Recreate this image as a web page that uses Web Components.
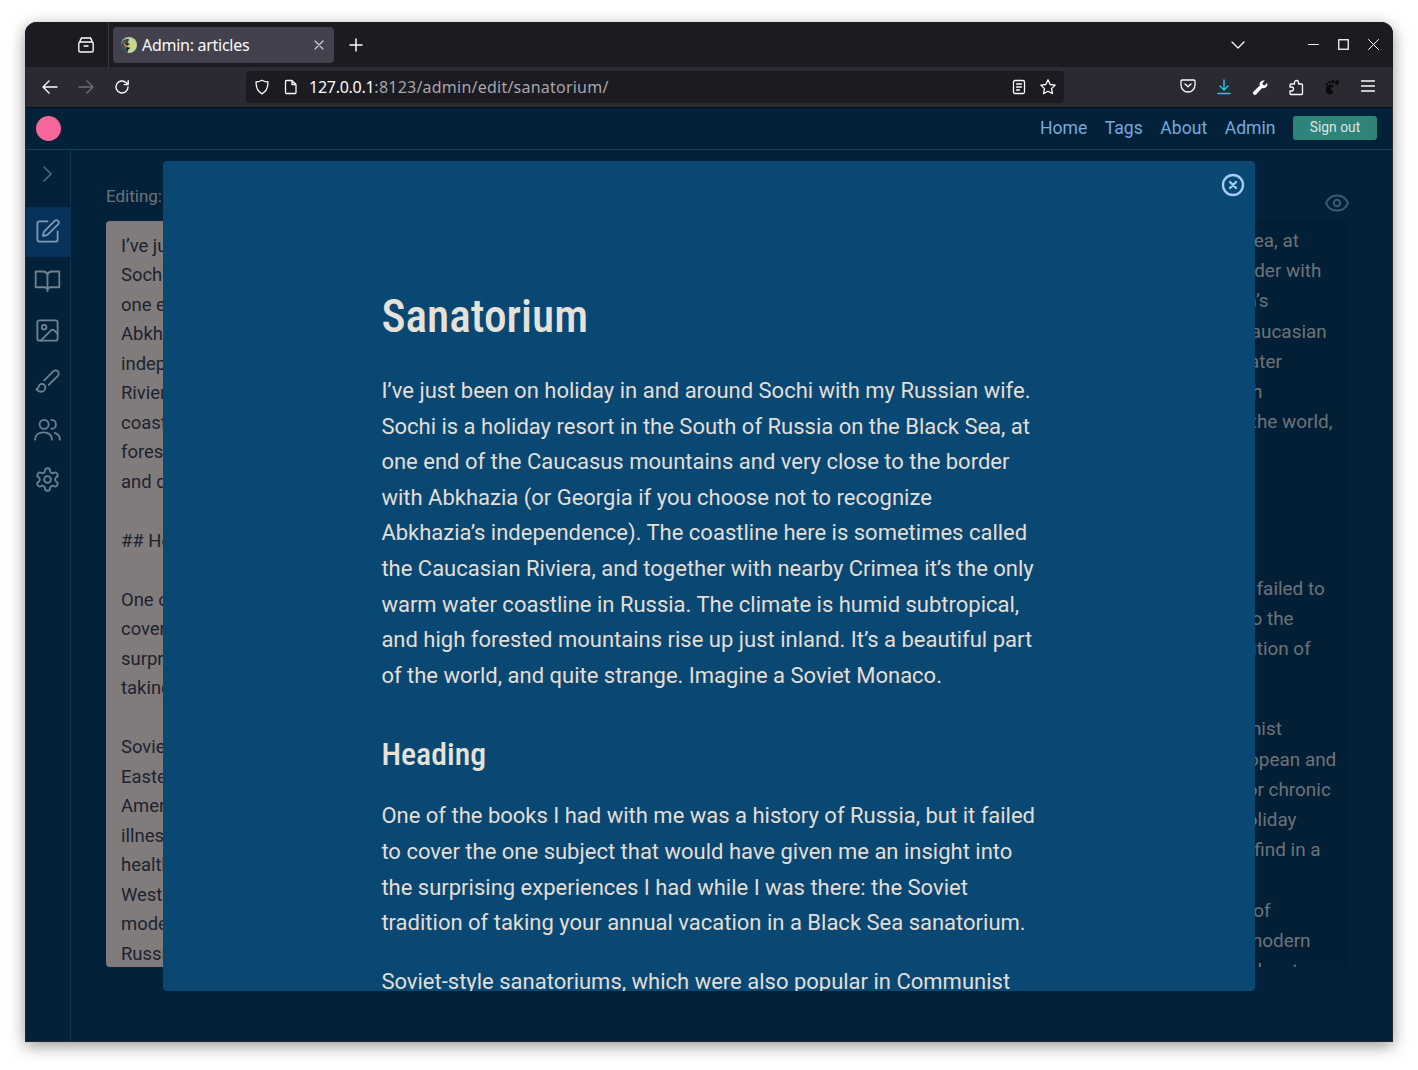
<!DOCTYPE html>
<html lang="en"><head><meta charset="utf-8"><title>Admin: articles</title>
<style>
html,body{margin:0;padding:0;background:#fff;height:1070px;overflow:hidden}
body{padding:22px 25px 28px;box-sizing:border-box;display:flex;font-family:Roboto,sans-serif}
</style></head><body>
<browser-window>
  <tab-strip slot="tabs"></tab-strip>
  <nav-toolbar slot="toolbar"></nav-toolbar>
  <app-header></app-header>
  <admin-editor></admin-editor>
  <article-modal>
    <h1>Sanatorium</h1>
    <p>I’ve just been on holiday in and around Sochi with my Russian wife. Sochi is a holiday resort in the South of Russia on the Black Sea, at one end of the Caucasus mountains and very close to the border with Abkhazia (or Georgia if you choose not to recognize Abkhazia’s independence). The coastline here is sometimes called the Caucasian Riviera, and together with nearby Crimea it’s the only warm water coastline in Russia. The climate is humid subtropical, and high forested mountains rise up just inland. It’s a beautiful part of the world, and quite strange. Imagine a Soviet Monaco.</p>
    <h2>Heading</h2>
    <p>One of the books I had with me was a history of Russia, but it failed to cover the one subject that would have given me an insight into the surprising experiences I had while I was there: the Soviet tradition of taking your annual vacation in a Black Sea sanatorium.</p>
    <p>Soviet-style sanatoriums, which were also popular in Communist Eastern Europe, are a cross between a hospital, a Central European and American spa resorts and a holiday camp.</p>
  </article-modal>
</browser-window>
<script>
const svg=(w,h,vb,body,extra='')=>`<svg width="${w}" height="${h}" viewBox="${vb}" fill="none" stroke="currentColor" stroke-linecap="round" stroke-linejoin="round" ${extra}>${body}</svg>`;
function def(name,html){
  customElements.define(name,class extends HTMLElement{
    constructor(){super();this.attachShadow({mode:'open'}).innerHTML=html;}
  });
}
def('browser-window',`<style>
:host{display:flex;flex-direction:column;flex:1;position:relative;border-radius:12px 12px 0 0;overflow:hidden;background:#03223a;
box-shadow:0 4px 16px rgba(0,0,0,.42);outline:1px solid rgba(40,40,46,.85);outline-offset:-1px}
::slotted(admin-editor){flex:1;min-height:0}
</style><slot name="tabs"></slot><slot name="toolbar"></slot><slot></slot>`);

def('tab-strip',`<style>
:host{display:flex;align-items:center;height:45px;background:#1c1b22;color:#fbfbfe;flex:none;position:relative}
.view{width:84px;display:flex;justify-content:flex-end;box-sizing:border-box;padding-right:13px;height:45px;align-items:center;border-right:1px solid #3a3942}
.tab{margin-left:4px;width:221px;height:36px;border-radius:4px;background:#42414d;display:flex;align-items:center;box-sizing:border-box;padding:0 10px 0 8px;font:16px "Noto Sans",sans-serif;letter-spacing:-.28px}
.tab span{flex:1;margin-left:5px;white-space:nowrap}
.fav{width:16px;height:16px;flex:none}
.plus{margin-left:15px;display:flex}
.right{margin-left:auto;display:flex;align-items:center}
.chev{margin-right:53px;display:flex}
.wc{display:flex;width:30px;justify-content:center}
</style>
<div class="view">${svg(18,16,'0 0 18 16','<path d="M4.500 1h9M3 5c0-1.500.5-2.500 1.500-4M15 5c0-1.500-.5-2.500-1.500-4"/><rect x="1.800" y="5" width="14.400" height="10" rx="1.600"/><path d="M7 9h4"/>','stroke-width="1.400"')}</div>
<div class="tab"><svg class="fav" viewBox="0 0 16 16"><circle cx="8" cy="8" r="8" fill="#c6d68f"/><path d="M0 9c0-5 4-8 8-7l-1 4-1 3 1 6.900C3 16 0 13 0 9z" fill="#36505f"/><path d="M2 5l7 2-3 2 4 2-5 1z" fill="#c98a28"/><path d="M3 5.500l6 1.500-3 1.500z" fill="#15151a"/><path d="M5 10l4 1-3 3z" fill="#15151a"/></svg><span>Admin: articles</span>${svg(10,10,'0 0 10 10','<path d="M1 1l8 8M9 1l-8 8"/>','stroke-width="1.1" style="color:#d4d4da"')}</div>
<div class="plus">${svg(14,14,'0 0 14 14','<path d="M7 1v12M1 7h12"/>','stroke-width="1.5"')}</div>
<div class="right"><div class="chev">${svg(14,8,'0 0 14 8','<path d="M1 1l6 6 6-6"/>','stroke-width="1.3"')}</div>
<div class="wc">${svg(11,11,'0 0 11 11','<path d="M.5 5.5h10"/>','stroke-width="1"')}</div>
<div class="wc">${svg(11,11,'0 0 11 11','<rect x=".75" y=".75" width="9.5" height="9.5" stroke-linejoin="miter"/>','stroke-width="1.3"')}</div>
<div class="wc" style="margin-right:5px">${svg(11,11,'0 0 11 11','<path d="M.5.5l10 10M10.5.5l-10 10"/>','stroke-width="1"')}</div></div>`);

def('nav-toolbar',`<style>
:host{display:flex;align-items:center;height:41px;box-sizing:border-box;background:#2b2a33;border-bottom:1px solid #0c0c0f;color:#fbfbfe;flex:none}
.b{width:36px;display:flex;justify-content:center;flex:none}
.back{margin-left:7px}
.url{margin-left:106px;width:818px;height:32px;background:#1c1b22;border-radius:4px;display:flex;align-items:center;box-sizing:border-box;position:relative;font:16px "Noto Sans",sans-serif;letter-spacing:-.27px}
.url .s{margin-left:8px;display:flex}.url .d{margin-left:14px;display:flex}
.u{margin-left:11px;white-space:nowrap}.u i{font-style:normal;color:#a5a5ad;letter-spacing:.23px}
.ur{margin-left:auto;display:flex;align-items:center;gap:13px;padding-right:7px}
.end{margin-left:auto;display:flex;padding-right:7px}
</style>
<div class="b back">${svg(16,14,'0 0 16 14','<path d="M15 7H1.5M7 1L1 7l6 6"/>','stroke-width="1.4"')}</div>
<div class="b" style="color:#6f6e75">${svg(16,14,'0 0 16 14','<path d="M1 7h13.5M9 1l6 6-6 6"/>','stroke-width="1.4"')}</div>
<div class="b">${svg(16,16,'0 0 16 16','<path d="M14 8a6 6 0 1 1-1.8-4.3L14 5.5M14.2 1.6v4h-4"/>','stroke-width="1.4"')}</div>
<div class="url"><span class="s">${svg(16,16,'0 0 16 16','<path d="M8 1.2c2 1.2 4 1.7 6 1.8 0 5-1.6 9.6-6 11.8C3.600 12.600 2 8 2 3c2-.1 4-.6 6-1.800z"/>','stroke-width="1.3"')}</span><span class="d">${svg(14,16,'0 0 14 16','<path d="M2.500 1.500h5.500l4 4v8a1 1 0 0 1-1 1h-8.500a1 1 0 0 1-1-1v-11a1 1 0 0 1 1-1zM8 1.500v4h4"/>','stroke-width="1.300"')}</span><span class="u">127.0.0.1<i>:8123/admin/edit/sanatorium/</i></span>
<span class="ur">${svg(14,16,'0 0 14 16','<rect x="1.500" y="1.500" width="11" height="13" rx="1.500"/><path d="M4.500 5h5M4.500 8h5M4.500 11h3"/>','stroke-width="1.300"')}${svg(18,18,'0 0 18 18','<path d="M9 1.800l2.200 4.700 5 .6-3.700 3.500 1 5.100L9 13.200l-4.500 2.500 1-5.100L1.800 7.100l5-.6z"/>','stroke-width="1.300"')}</span></div>
<div class="end">
<div class="b">${svg(16,14,'0 0 16 14','<path d="M2.200 1h11.600A1.300 1.300 0 0 1 15 2.300V6A7 7 0 0 1 1 6V2.300A1.300 1.300 0 0 1 2.200 1zM5 5l3 2.800L11 5"/>','stroke-width="1.300"')}</div>
<div class="b" style="color:#2bc4e8">${svg(16,16,'0 0 16 16','<path d="M8 1v9.500M4 7l4 4 4-4M2 14.500h12"/>','stroke-width="1.400"')}</div>
<div class="b"><svg width="16" height="16" viewBox="0 0 16 16"><path d="M1.600 12.600l6.200-6a4 4 0 0 1 5-5l-2.300 2.300.3 2 2 .4 2.300-2.400a4 4 0 0 1-5 5.200l-6 6.300a1.600 1.600 0 0 1-2.500-2.800z" fill="currentColor"/></svg></div>
<div class="b">${svg(16,17,'0 0 16 17','<path d="M6.500 5V3.500a2 2 0 0 1 4 0V5h3a1 1 0 0 1 1 1v8.500a1 1 0 0 1-1 1H3a1 1 0 0 1-1-1V12h1.500a2 2 0 0 0 0-4H2V6a1 1 0 0 1 1-1z"/>','stroke-width="1.300"')}</div>
<div class="b"><svg width="16" height="16" viewBox="0 0 16 16" fill="#0a0a0a"><path d="M6.500 15.500c-3 0-4.800-2-4.800-4.700 0-2.800 2.300-5 5-5 1.200 0 1.800.4 3 .5l.4 1.500c-1.900-.4-3.300.6-3.300 2.100 0 1.300 1 2 2.300 2 .3 2-.7 3.600-2.600 3.600z"/><ellipse cx="2.800" cy="5.200" rx="1.100" ry="1.500"/><ellipse cx="5.600" cy="3.200" rx="1.200" ry="1.800"/><ellipse cx="9" cy="2.800" rx="1.500" ry="2"/><ellipse cx="13" cy="3.600" rx="1.900" ry="2.500"/></svg></div>
<div class="b">${svg(16,14,'0 0 16 14','<path d="M1.500 2h13M1.500 7h13M1.500 12h13"/>','stroke-width="1.300"')}</div>
</div>`);

def('app-header',`<style>
:host{display:flex;align-items:center;height:42px;box-sizing:border-box;background:#03223a;border-bottom:1px solid #14405f;flex:none;padding:0 16px 1px 11px;font:17.600px Roboto,sans-serif}
.logo{width:25px;height:25px;border-radius:50%;background:#f5679b}
nav{margin-left:auto;display:flex;gap:17.500px;align-items:center;color:#78a9de}
a{color:inherit;text-decoration:none}
.so{margin-left:17.500px;width:84px;height:24px;box-sizing:border-box;border-radius:3px;background:#2f8479;color:#dfe4e0;font-size:13.800px;display:flex;align-items:center;justify-content:center;padding-bottom:2px}
</style><div class="logo"></div><nav><a href="#">Home</a><a href="#">Tags</a><a href="#">About</a><a href="#">Admin</a></nav><div class="so">Sign out</div>`);

const icons=[
'<path d="M12 3H5a2 2 0 0 0-2 2v14a2 2 0 0 0 2 2h14a2 2 0 0 0 2-2v-7"/><path d="M18.375 2.625a1 1 0 0 1 3 3l-9.013 9.014a2 2 0 0 1-.853.505l-2.873.84a.5.5 0 0 1-.62-.62l.84-2.873a2 2 0 0 1 .506-.852z"/>',
'<path d="M1.500 4h6.500a4 4 0 0 1 4 3v13a3 3 0 0 0-3-2H1.500zM22.500 4H16a4 4 0 0 0-4 3v13a3 3 0 0 1 3-2h7.500zM12 20v1.500"/>',
'<rect x="3" y="3" width="18" height="18" rx="2"/><circle cx="9" cy="9" r="2"/><path d="m21 15-3.086-3.086a2 2 0 0 0-2.828 0L6 21"/>',
'<path d="m9.060 11.900 8.070-8.060a2.850 2.850 0 1 1 4.030 4.030l-8.060 8.080"/><path d="M7.070 14.940c-1.660 0-3 1.350-3 3.020 0 1.330-2.500 1.520-2 2.020 1.080 1.100 2.490 2.020 4 2.020 2.200 0 4-1.800 4-4.040a3.010 3.010 0 0 0-3-3.020z"/>',
'<path d="M1 21c0-4 3-6.500 7.500-6.500S16 17 16 21"/><circle cx="9" cy="7.500" r="4"/><path d="M23 21c0-3-1.500-5-4.500-6M15.500 3.500a4 4 0 0 1 0 8"/>',
'<path d="M12.220 2h-.44a2 2 0 0 0-2 2v.18a2 2 0 0 1-1 1.730l-.43.25a2 2 0 0 1-2 0l-.15-.08a2 2 0 0 0-2.730.73l-.22.38a2 2 0 0 0 .73 2.730l.15.1a2 2 0 0 1 1 1.720v.51a2 2 0 0 1-1 1.740l-.15.09a2 2 0 0 0-.73 2.730l.22.38a2 2 0 0 0 2.730.73l.15-.08a2 2 0 0 1 2 0l.43.25a2 2 0 0 1 1 1.730V20a2 2 0 0 0 2 2h.44a2 2 0 0 0 2-2v-.18a2 2 0 0 1 1-1.730l.43-.25a2 2 0 0 1 2 0l.15.08a2 2 0 0 0 2.730-.73l.22-.39a2 2 0 0 0-.73-2.730l-.15-.08a2 2 0 0 1-1-1.740v-.5a2 2 0 0 1 1-1.740l.15-.09a2 2 0 0 0 .73-2.730l-.22-.38a2 2 0 0 0-2.730-.73l-.15.08a2 2 0 0 1-2 0l-.43-.25a2 2 0 0 1-1-1.730V4a2 2 0 0 0-2-2z"/><circle cx="12" cy="12" r="3"/>'];
def('side-bar',`<style>
:host{display:flex;flex-direction:column;width:46px;box-sizing:border-box;border-right:1px solid #0f3350;color:#71808e;flex:none}
.tg{height:57px;display:flex;align-items:center;justify-content:center;color:#4f6a82;padding:0 1px 9px 0;box-sizing:border-box}
.i{height:49.600px;display:flex;align-items:center;justify-content:center;padding:0 1px 1px 0;box-sizing:border-box}
.i.on{background:#07335a;color:#7f99b2}
svg{display:block}
</style><div class="tg">${svg(18,18,'0 0 18 18','<path d="M6 2l7 7-7 7"/>','stroke-width="1.600"')}</div>
${icons.map((p,n)=>`<div class="i${n==0?' on':''}">${svg(27,27,'0 0 24 24',p,'stroke-width="1.600"')}</div>`).join('')}`);

const leftLines=`I’ve just been on holiday in and around Sochi with my Russian wife.
Sochi is a holiday resort in the South of Russia on the Black Sea, at
one end of the Caucasus mountains and very close to the border with
Abkhazia (or Georgia if you choose not to recognize Abkhazia’s
independence). The coastline here is sometimes called the Caucasian
Riviera, and together with nearby Crimea it’s the only warm water
coastline in Russia. The climate is humid subtropical, and high
forested mountains rise up just inland. It’s a beautiful part of the world,
and quite strange. Imagine a Soviet Monaco.

## Heading

One of the books I had with me was a history of Russia, but it failed to
cover the one subject that would have given me an insight into the
surprising experiences I had while I was there: the Soviet tradition of
taking your annual vacation in a Black Sea sanatorium.

Soviet-style sanatoriums, which were also popular in Communist
Eastern Europe, are a cross between a hospital, a Central European and
American spa resorts and a holiday camp. They offer cures for chronic
illnesses, and most guests simply come to enjoy a seaside holiday
health regime is far stricter than anything that you could ever find in a
Western resort, with treatments ranging from strange to odd.
modern medicine would not think of, though some are a kind of
Russians swear by them, even as the resorts themselves go modern`;
const rl=leftLines.split('\n');
def('markdown-pane',`<style>
:host{display:block;background:#807c7c;border-radius:4px;overflow:hidden;color:#1d2230;font:18.440px/29.500px Roboto,sans-serif;box-sizing:border-box;white-space:pre;padding:10.600px 15px 0}
</style>${leftLines}`);
def('preview-pane',`<style>
:host{display:block;background:#031f35;border-radius:4px;overflow:hidden;color:#6c7378;font:18.900px/30.200px Roboto,sans-serif;white-space:nowrap;position:relative;box-sizing:border-box}
.in{padding:5px 0 0 16px}
p{margin:0 0 20px}
.h{height:86px}
</style><div class="in">
<p>${rl.slice(1,8).join('<br>')}<br>and quite strange.</p>
<div class="h"></div>
<p>${rl.slice(12,15).join('<br>')}<br>taking your annual vacation.</p>
<p>${rl.slice(17,25).join('<br>')}<br>and they look set to survive well into the next few decades, at least.</p>
</div>`);
def('admin-editor',`<style>
:host{display:flex;min-height:0;background:#03223a}
main{flex:1;min-width:0;padding:34px 44px 75px 35px;display:flex;flex-direction:column}
.top{display:flex;justify-content:space-between;height:38px;color:#6d7378;font:17px/24px Roboto,sans-serif;flex:none;margin-bottom:-1px}
.eye{color:#3d5a75;margin:6px -1px 0 0;display:flex}
.cols{flex:1;min-height:0;display:grid;grid-template-columns:604px 1fr;gap:16px}
markdown-pane,preview-pane{min-width:0;min-height:0}
</style><side-bar></side-bar><main><div class="top"><span>Editing: Sanatorium</span><span class="eye">${svg(26,26,'0 0 24 24','<path d="M2.062 12.348a1 1 0 0 1 0-.696 10.750 10.750 0 0 1 19.876 0 1 1 0 0 1 0 .696 10.750 10.750 0 0 1-19.876 0"/><circle cx="12" cy="12" r="3"/>','stroke-width="1.800"')}</span></div>
<div class="cols"><markdown-pane></markdown-pane><preview-pane></preview-pane></div></main>`);

def('article-modal',`<style>
:host{position:absolute;left:138px;top:139px;width:1092px;height:830px;background:#0a4874;border-radius:4px;overflow:hidden;color:#e3ded5;font:22px/35.600px Roboto,sans-serif;box-sizing:border-box}
.x{position:absolute;top:12px;right:10px;color:#a5cdf1;display:flex}
.c{width:656px;margin-left:218.400px;padding-top:128px}
::slotted(h1){margin:0 0 28px;font:500 45.400px/56px Roboto,sans-serif;font-stretch:75%;white-space:nowrap;color:#e7e2d9}
::slotted(h2){margin:41px 0 24px;font:500 31.800px/40px Roboto,sans-serif;font-stretch:75%;color:#e7e2d9}
::slotted(p){margin:0 0 23px}
</style><div class="x">${svg(24,24,'0 0 24 24','<circle cx="12" cy="12" r="10"/><path d="M9 9l6 6M15 9l-6 6"/>','stroke-width="2.300"')}</div><div class="c"><slot></slot></div>`);
</script>
</body></html>
